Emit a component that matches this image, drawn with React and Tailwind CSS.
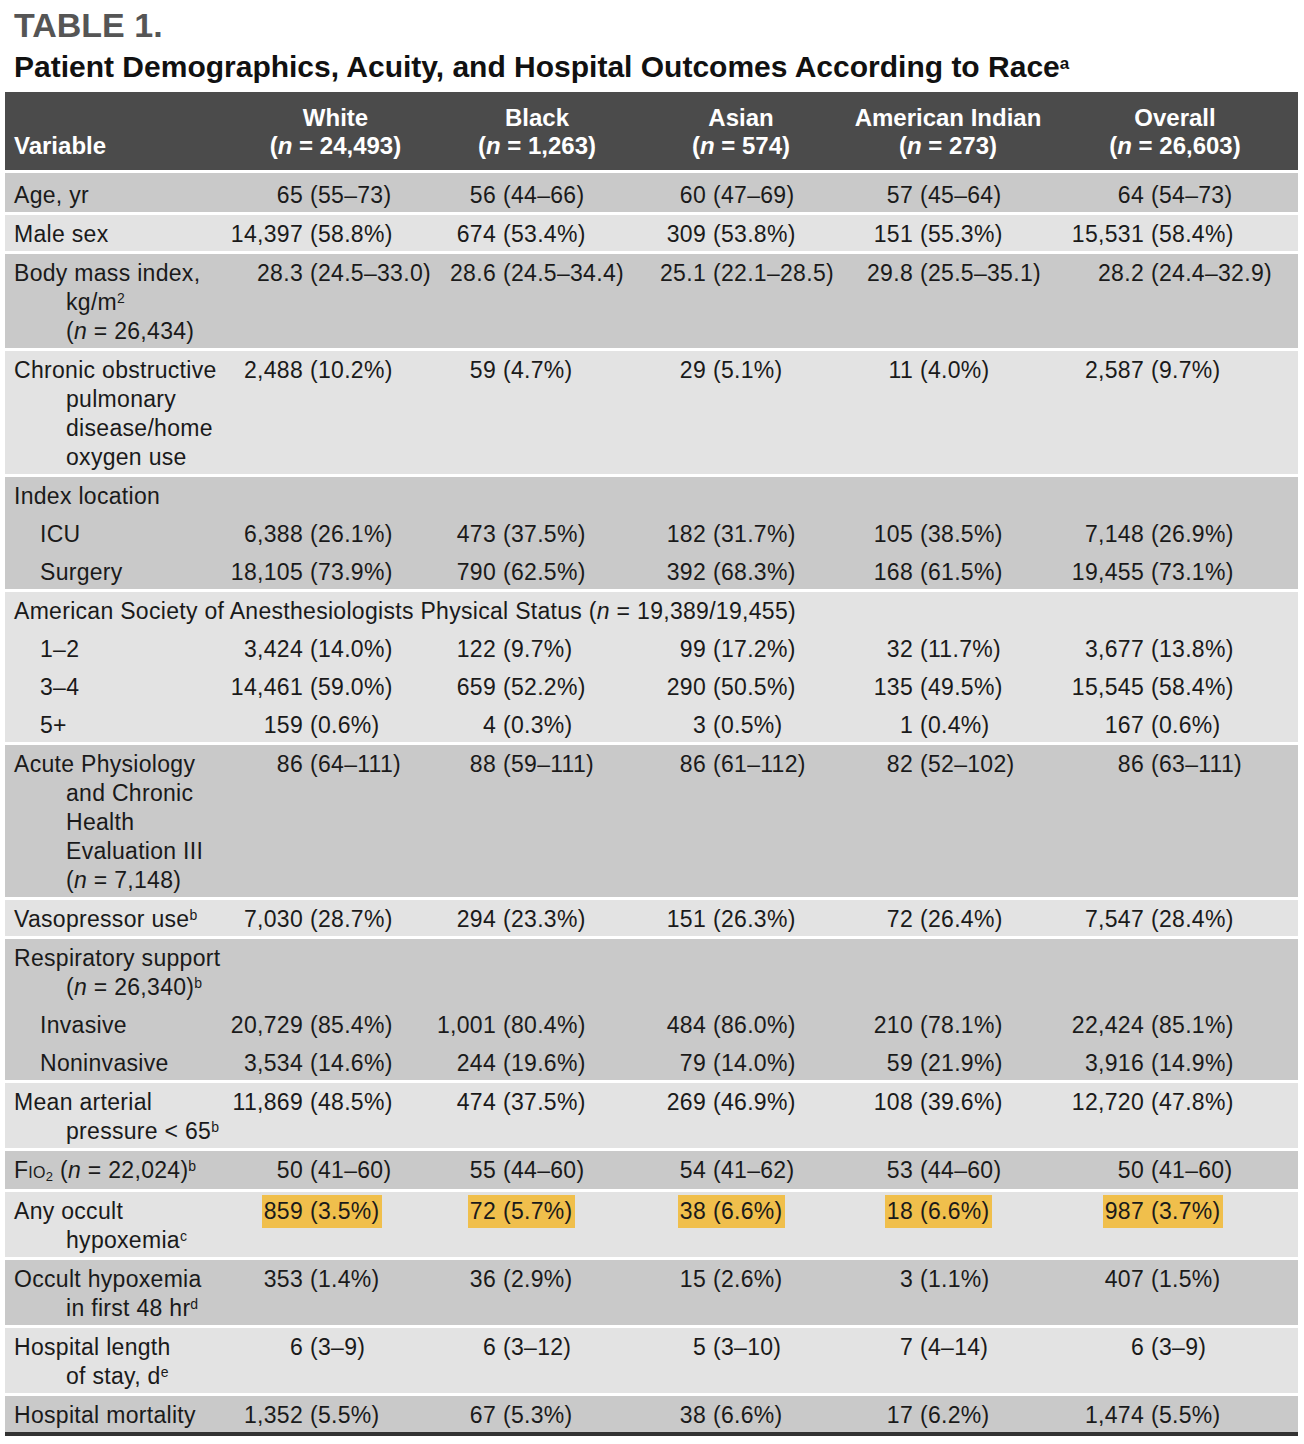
const DARK = 'bg-[#c9c9c9]';
const LIGHT = 'bg-[#e3e3e3]';
const NUMW = ['w-[88px]', 'w-[76px]', 'w-[76px]', 'w-[83px]', 'w-[104px]'];

const N = () => <i>n</i>;
const Sup = ({ children }) => <sup className="text-[14px]">{children}</sup>;

const groups = [
  {
    tone: DARK,
    rows: [{ label: 'Age, yr', vals: ['65 (55–73)', '56 (44–66)', '60 (47–69)', '57 (45–64)', '64 (54–73)'] }],
  },
  {
    tone: LIGHT,
    rows: [{ label: 'Male sex', vals: ['14,397 (58.8%)', '674 (53.4%)', '309 (53.8%)', '151 (55.3%)', '15,531 (58.4%)'] }],
  },
  {
    tone: DARK,
    rows: [
      {
        label: (
          <>
            Body mass index,
            <br />
            kg/m<Sup>2</Sup>
            <br />(<N /> = 26,434)
          </>
        ),
        vals: ['28.3 (24.5–33.0)', '28.6 (24.5–34.4)', '25.1 (22.1–28.5)', '29.8 (25.5–35.1)', '28.2 (24.4–32.9)'],
      },
    ],
  },
  {
    tone: LIGHT,
    rows: [
      {
        label: (
          <>
            Chronic obstructive
            <br />
            pulmonary
            <br />
            disease/home
            <br />
            oxygen use
          </>
        ),
        vals: ['2,488 (10.2%)', '59 (4.7%)', '29 (5.1%)', '11 (4.0%)', '2,587 (9.7%)'],
      },
    ],
  },
  {
    tone: DARK,
    rows: [
      { label: 'Index location', vals: [] },
      { label: 'ICU', sub: true, vals: ['6,388 (26.1%)', '473 (37.5%)', '182 (31.7%)', '105 (38.5%)', '7,148 (26.9%)'] },
      { label: 'Surgery', sub: true, vals: ['18,105 (73.9%)', '790 (62.5%)', '392 (68.3%)', '168 (61.5%)', '19,455 (73.1%)'] },
    ],
  },
  {
    tone: LIGHT,
    rows: [
      {
        label: (
          <>
            American Society of Anesthesiologists Physical Status (<N /> = 19,389/19,455)
          </>
        ),
        full: true,
        vals: [],
      },
      { label: '1–2', sub: true, vals: ['3,424 (14.0%)', '122 (9.7%)', '99 (17.2%)', '32 (11.7%)', '3,677 (13.8%)'] },
      { label: '3–4', sub: true, vals: ['14,461 (59.0%)', '659 (52.2%)', '290 (50.5%)', '135 (49.5%)', '15,545 (58.4%)'] },
      { label: '5+', sub: true, vals: ['159 (0.6%)', '4 (0.3%)', '3 (0.5%)', '1 (0.4%)', '167 (0.6%)'] },
    ],
  },
  {
    tone: DARK,
    rows: [
      {
        label: (
          <>
            Acute Physiology
            <br />
            and Chronic
            <br />
            Health
            <br />
            Evaluation III
            <br />(<N /> = 7,148)
          </>
        ),
        vals: ['86 (64–111)', '88 (59–111)', '86 (61–112)', '82 (52–102)', '86 (63–111)'],
      },
    ],
  },
  {
    tone: LIGHT,
    rows: [
      {
        label: (
          <>
            Vasopressor use<Sup>b</Sup>
          </>
        ),
        vals: ['7,030 (28.7%)', '294 (23.3%)', '151 (26.3%)', '72 (26.4%)', '7,547 (28.4%)'],
      },
    ],
  },
  {
    tone: DARK,
    rows: [
      {
        label: (
          <>
            Respiratory support
            <br />(<N /> = 26,340)<Sup>b</Sup>
          </>
        ),
        vals: [],
      },
      { label: 'Invasive', sub: true, vals: ['20,729 (85.4%)', '1,001 (80.4%)', '484 (86.0%)', '210 (78.1%)', '22,424 (85.1%)'] },
      { label: 'Noninvasive', sub: true, vals: ['3,534 (14.6%)', '244 (19.6%)', '79 (14.0%)', '59 (21.9%)', '3,916 (14.9%)'] },
    ],
  },
  {
    tone: LIGHT,
    rows: [
      {
        label: (
          <>
            Mean arterial
            <br />
            pressure &lt; 65<Sup>b</Sup>
          </>
        ),
        vals: ['11,869 (48.5%)', '474 (37.5%)', '269 (46.9%)', '108 (39.6%)', '12,720 (47.8%)'],
      },
    ],
  },
  {
    tone: DARK,
    rows: [
      {
        label: (
          <>
            F<span className="text-[16px]">IO</span>
            <sub className="text-[13px]">2</sub> (<N /> = 22,024)<Sup>b</Sup>
          </>
        ),
        vals: ['50 (41–60)', '55 (44–60)', '54 (41–62)', '53 (44–60)', '50 (41–60)'],
      },
    ],
  },
  {
    tone: LIGHT,
    rows: [
      {
        label: (
          <>
            Any occult
            <br />
            hypoxemia<Sup>c</Sup>
          </>
        ),
        hl: true,
        vals: ['859 (3.5%)', '72 (5.7%)', '38 (6.6%)', '18 (6.6%)', '987 (3.7%)'],
      },
    ],
  },
  {
    tone: DARK,
    rows: [
      {
        label: (
          <>
            Occult hypoxemia
            <br />
            in first 48 hr<Sup>d</Sup>
          </>
        ),
        vals: ['353 (1.4%)', '36 (2.9%)', '15 (2.6%)', '3 (1.1%)', '407 (1.5%)'],
      },
    ],
  },
  {
    tone: LIGHT,
    rows: [
      {
        label: (
          <>
            Hospital length
            <br />
            of stay, d<Sup>e</Sup>
          </>
        ),
        vals: ['6 (3–9)', '6 (3–12)', '5 (3–10)', '7 (4–14)', '6 (3–9)'],
      },
    ],
  },
  {
    tone: DARK,
    rows: [{ label: 'Hospital mortality', vals: ['1,352 (5.5%)', '67 (5.3%)', '38 (6.6%)', '17 (6.2%)', '1,474 (5.5%)'] }],
  },
];

const heads = [
  ['White', '24,493'],
  ['Black', '1,263'],
  ['Asian', '574'],
  ['American Indian', '273'],
  ['Overall', '26,603'],
];

function Value({ v, i, hl }) {
  const k = v.indexOf(' (');
  const num = v.slice(0, k);
  const rest = v.slice(k + 1);
  return (
    <div className="flex items-start whitespace-nowrap">
      <div className={`${NUMW[i]} flex shrink-0 items-start justify-end`}>
        <span className={hl ? 'bg-[#f0bf4c] pl-[2px] py-[2px] -my-[2px]' : ''}>{num}</span>
      </div>
      <span className={hl ? 'bg-[#f0bf4c] pl-[7px] pr-[2px] py-[2px] -my-[2px]' : 'pl-[7px]'}>{rest}</span>
    </div>
  );
}

function Row({ row }) {
  const labelCls = row.full
    ? 'col-span-6 pl-[9px] whitespace-nowrap'
    : row.sub
      ? 'pl-[35px] whitespace-nowrap'
      : 'pl-[61px] indent-[-52px] whitespace-nowrap';
  return (
    <div className="grid grid-cols-[210px_205px_210px_200px_210px_258px]">
      <div className={labelCls}>{row.label}</div>
      {row.vals.map((v, i) => (
        <Value key={i} v={v} i={i} hl={row.hl} />
      ))}
    </div>
  );
}

export default function App() {
  return (
    <div className="w-[1304px] bg-white pb-[8px] font-['Liberation_Sans',Arial,sans-serif] text-[#1a1a1a]">
      <div className="pl-[14px] pt-[8px]">
        <h1 className="text-[34px] font-bold leading-[34px] text-[#555555]">TABLE 1.</h1>
        <h2 className="mt-[10px] text-[30px] font-bold leading-[30px] text-[#111111]">
          Patient Demographics, Acuity, and Hospital Outcomes According to Race
          <sup className="text-[17px]">a</sup>
        </h2>
      </div>

      <div className="ml-[5px] mt-[10px] w-[1293px]">
        <div className="grid grid-cols-[230px_201px_202px_206px_208px_246px] bg-[#4b4b4b] pt-[12px] pb-[10px] text-[24px] font-bold leading-[28px] text-white">
          <div className="flex items-end pl-[9px]">Variable</div>
          {heads.map(([name, n]) => (
            <div key={name} className="text-center whitespace-nowrap">
              <div>{name}</div>
              <div>
                (<i>n</i> = {n})
              </div>
            </div>
          ))}
        </div>

        <div className="text-[23px] leading-[29px] tracking-[0.3px]">
          {groups.map((g, gi) => (
            <div
              key={gi}
              className={`${g.tone} ${gi === 0 ? 'pt-[8px]' : 'pt-[5px]'} flex flex-col gap-[9px] border-t-[3px] border-white pb-[2px]`}
            >
              {g.rows.map((r, ri) => (
                <Row key={ri} row={r} />
              ))}
            </div>
          ))}
        </div>
        <div className="h-[4px] bg-[#333333]" />
      </div>
    </div>
  );
}
